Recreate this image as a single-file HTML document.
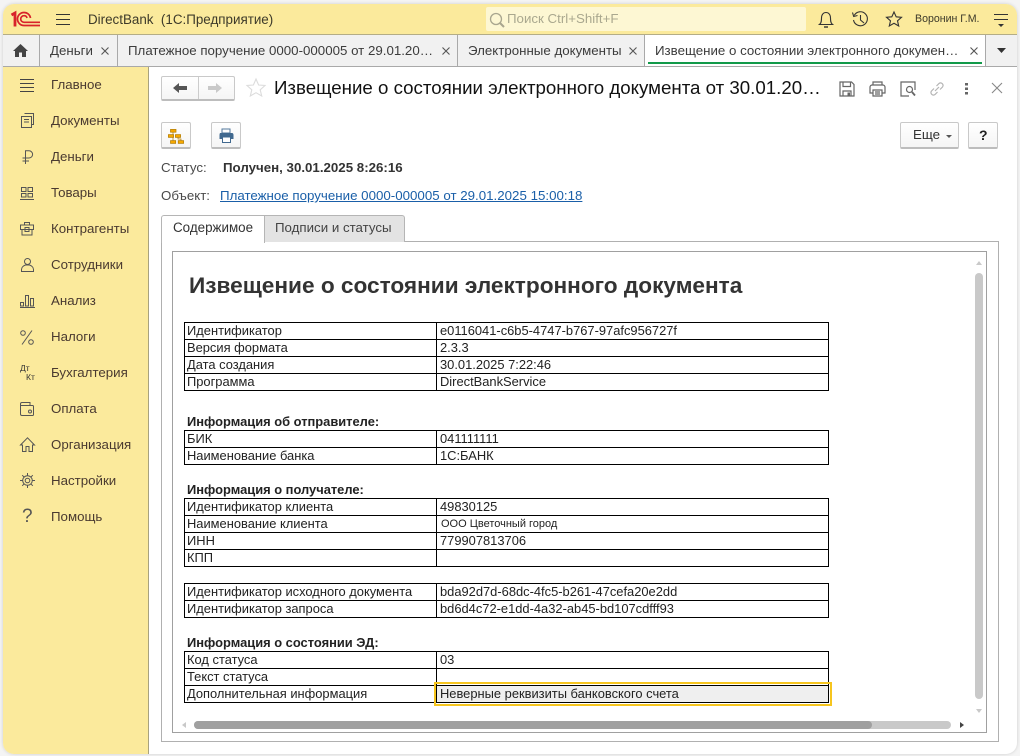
<!DOCTYPE html>
<html lang="ru"><head><meta charset="utf-8"><title>DirectBank</title>
<style>
html,body{margin:0;padding:0;background:#f4f4f4;}
body{position:relative;width:1020px;height:756px;overflow:hidden;font-family:"Liberation Sans",sans-serif;font-size:12px;color:#333;}
.a{position:absolute;white-space:nowrap;}
.win{position:absolute;left:3px;top:4px;width:1014px;height:750px;background:#fff;border-radius:11px;overflow:hidden;box-shadow:0 0 3px #ccc;}
.hdr{position:absolute;left:3px;top:4px;width:1014px;height:30px;background:#fbea9c;border-radius:11px 11px 0 0;}
.tabs{position:absolute;left:3px;top:35px;width:1014px;height:31px;background:#f1f1f1;}
.line{position:absolute;background:#a9a9a9;}
.side{position:absolute;left:3px;top:67px;width:145px;height:687px;background:#fbea9c;border-radius:0 0 0 11px;}
.m{position:absolute;left:51px;font-size:13.3px;color:#4a3a30;white-space:nowrap;line-height:16px;}
.t{position:absolute;font-size:13.3px;color:#3c3c3c;white-space:nowrap;line-height:16px;top:43px;}
.x{position:absolute;top:47px;width:8px;height:8px;}
.btn{position:absolute;background:linear-gradient(#fff,#f5f5f5);border:1px solid #c9c9c9;border-bottom:2px solid #bdbdbd;border-radius:2px;box-sizing:border-box;}
table{position:absolute;left:184px;width:645px;border-collapse:collapse;table-layout:fixed;font-size:12.9px;color:#222;}
td{border:1px solid #000;height:16px;padding:0 3px;line-height:16px;white-space:nowrap;overflow:hidden;box-sizing:border-box;}
td:first-child{width:252px;padding-left:2px;}
.b{position:absolute;left:187px;font-weight:bold;font-size:12.9px;color:#222;line-height:16px;white-space:nowrap;}
svg{position:absolute;overflow:visible;}
</style></head><body>
<div class="win"></div>
<div class="hdr"></div>
<div class="line" style="left:3px;top:34px;width:1014px;height:1px;background:#b4ad86"></div>
<div class="tabs"></div>
<div class="line" style="left:3px;top:66px;width:1014px;height:1px"></div>
<div class="side"></div>
<div class="line" style="left:148px;top:67px;width:1px;height:687px;background:#a8a27e"></div>

<svg style="left:11px;top:11px" width="30" height="16" viewBox="0 0 30 16" fill="none" stroke="#d8232a"><path d="M.5 4L4 2V15.500" stroke-width="2.800"/><path d="M29 14.500H13A6.500 6.500 0 0 1 13 1.500A6.500 6.500 0 0 1 19.500 7" stroke-width="1.700"/><path d="M29 11.300H13A3.300 3.300 0 0 1 13 4.700A3 3 0 0 1 16 7" stroke-width="1.700"/></svg>
<svg style="left:56px;top:13px" width="15" height="13" stroke="#333" stroke-width="1"><path d="M0 1.500H14M0 6.500H14M0 11.500H14"/></svg>
<div class="a" style="left:88px;top:12px;font-size:13.400px;line-height:16px;color:#3d3a2a">DirectBank&nbsp; (1С:Предприятие)</div>
<div class="a" style="left:486px;top:7px;width:320px;height:24px;background:#fdf7d3;border-radius:2px"></div>
<svg style="left:489px;top:12px" width="16" height="16" fill="none" stroke="#a9a68f" stroke-width="1.300"><circle cx="7" cy="7" r="5.500"/><path d="M11 11L15 15" stroke-width="2"/></svg>
<div class="a" style="left:507px;top:11px;font-size:13.300px;line-height:16px;color:#aaa88f">Поиск Ctrl+Shift+F</div>
<svg style="left:818px;top:11px" width="17" height="17" fill="none" stroke="#333" stroke-width="1.100"><path d="M1.500 13.500C3.500 12 3.500 9.500 3.500 7C3.500 3.500 5.500 1.500 8 1.500S12.500 3.500 12.500 7C12.500 9.500 12.500 12 14.500 13.500Z"/><path d="M6 16H10" stroke-width="1.400"/></svg>
<svg style="left:852px;top:11px" width="17" height="17" fill="none" stroke="#333" stroke-width="1.100"><path d="M2.200 4.500A7 7 0 1 1 1.500 9"/><path d="M0.500 1.500L1.700 5.500L5.500 4.500" /><path d="M8.500 4V9L12 12"/></svg>
<svg style="left:886px;top:11px" width="17" height="16" fill="none" stroke="#333" stroke-width="1.100"><path d="M8 1L10.200 5.800L15.500 6.300L11.500 9.800L12.700 15L8 12.300L3.300 15L4.500 9.800L0.500 6.300L5.800 5.800Z"/></svg>
<div class="a" style="left:915px;top:12px;font-size:10.600px;line-height:15px;color:#3d3a2a">Воронин Г.М.</div>
<svg style="left:994px;top:14px" width="15" height="13" stroke="#333" stroke-width="1"><path d="M0 .5H14M0 5.500H14"/><path d="M4 10H10L7 13Z" fill="#333" stroke="none"/></svg>

<svg style="left:13px;top:44px" width="15" height="13" fill="#444"><path d="M7.500 0L15 7H13V13H9V8.500H6V13H2V7H0Z"/></svg>
<div class="line" style="left:39px;top:35px;width:1px;height:31px"></div>
<div class="t" style="left:50px">Деньги</div>
<svg class="x" style="left:101px" stroke="#555" stroke-width="1.100"><path d="M.5 .5L7.500 7.500M7.500 .5L.5 7.500"/></svg>
<div class="line" style="left:117px;top:35px;width:1px;height:31px"></div>
<div class="t" style="left:128px">Платежное поручение 0000-000005 от 29.01.20…</div>
<svg class="x" style="left:442px" stroke="#555" stroke-width="1.100"><path d="M.5 .5L7.500 7.500M7.500 .5L.5 7.500"/></svg>
<div class="line" style="left:457px;top:35px;width:1px;height:31px"></div>
<div class="t" style="left:468px">Электронные документы</div>
<svg class="x" style="left:629px" stroke="#555" stroke-width="1.100"><path d="M.5 .5L7.500 7.500M7.500 .5L.5 7.500"/></svg>
<div class="line" style="left:644px;top:35px;width:1px;height:31px"></div>
<div class="a" style="left:645px;top:35px;width:340px;height:31px;background:#fff"></div>
<div class="t" style="left:655px">Извещение о состоянии электронного докумен…</div>
<svg class="x" style="left:970px" stroke="#555" stroke-width="1.100"><path d="M.5 .5L7.500 7.500M7.500 .5L.5 7.500"/></svg>
<div class="a" style="left:648px;top:62px;width:334px;height:2px;background:#129a4a"></div>
<div class="line" style="left:985px;top:35px;width:1px;height:31px"></div>
<svg style="left:997px;top:48px" width="10" height="6" fill="#333"><path d="M0 0H9L4.500 5Z"/></svg>

<svg style="left:20px;top:79px" width="14" height="13" stroke="#444"><path d="M0 .5H14M0 4.500H14M0 8.500H14M0 12.500H14"/></svg>
<div class="m" style="top:77px">Главное</div>
<svg style="left:21px;top:113px" width="13" height="15" fill="none" stroke="#555"><path d="M3.500 .5H12.500V11.500H10.500M.5 3.500H10.500V14.500H.5ZM3 6.500H8M3 9H8"/></svg>
<div class="m" style="top:113px">Документы</div>
<svg style="left:22px;top:150px" width="11" height="15" fill="none" stroke="#555"><path d="M3.500 14V.8H7A3.500 3.500 0 0 1 7 8H.5M.5 11H7"/></svg>
<div class="m" style="top:149px">Деньги</div>
<svg style="left:20px;top:186px" width="14" height="14" fill="none" stroke="#555"><path d="M1.500 1.500H6V5.500H1.500ZM8 1.500H12.500V5.500H8ZM1.500 7.500H6V11H1.500ZM8 7.500H12.500V11H8ZM0 13.500H14"/></svg>
<div class="m" style="top:185px">Товары</div>
<svg style="left:20px;top:222px" width="14" height="14" fill="none" stroke="#555"><path d="M4.500 3V.5H9.500V3M.5 3H13.500V7.500H.5ZM2 7.500V13H12V7.500M5 5.500H9V9.500H5Z"/></svg>
<div class="m" style="top:221px">Контрагенты</div>
<svg style="left:21px;top:258px" width="13" height="14" fill="none" stroke="#555"><circle cx="6.500" cy="3.500" r="3"/><path d="M.5 13.500V11.500C.5 9 3 7.500 4.500 7H8.500C10 7.500 12.500 9 12.500 11.500V13.500Z"/></svg>
<div class="m" style="top:257px">Сотрудники</div>
<svg style="left:20px;top:294px" width="15" height="14" fill="none" stroke="#555"><path d="M.5 8.500H3.500V12H.5ZM5.500 1.500H8.500V12H5.500ZM10.500 4.500H13.500V12H10.500ZM0 13.500H15"/></svg>
<div class="m" style="top:293px">Анализ</div>
<svg style="left:20px;top:330px" width="14" height="15" fill="none" stroke="#555"><circle cx="3" cy="3" r="2.300"/><circle cx="11" cy="12" r="2.300"/><path d="M12 .5L2 14.500"/></svg>
<div class="m" style="top:329px">Налоги</div>
<div class="a" style="left:20px;top:364px;font-size:8.500px;line-height:9px;color:#333">Дт</div>
<div class="a" style="left:26px;top:373px;font-size:8.500px;line-height:9px;color:#333">Кт</div>
<div class="m" style="top:365px">Бухгалтерия</div>
<svg style="left:20px;top:402px" width="14" height="14" fill="none" stroke="#555"><path d="M.5 12V2C.5 1 1 .5 2 .5H10V3.500M.5 3.500H12.500C13 3.500 13.500 4 13.500 4.500V12.500C13.500 13 13 13.500 12.500 13.500H2C1 13.500 .5 13 .5 12Z"/><circle cx="10" cy="9.500" r="1.500"/></svg>
<div class="m" style="top:401px">Оплата</div>
<svg style="left:20px;top:437px" width="15" height="15" fill="none" stroke="#555"><path d="M.5 8L7.500 .8L14.500 8H12.500V14.500H9V9.500H6V14.500H2.500V8Z"/></svg>
<div class="m" style="top:437px">Организация</div>
<svg style="left:20px;top:473px" width="15" height="15" fill="none" stroke="#555"><circle cx="7.500" cy="7.500" r="4.800"/><circle cx="7.500" cy="7.500" r="2.300"/><path d="M7.500 0V2.500M7.500 12.500V15M0 7.500H2.500M12.500 7.500H15M2.200 2.200L3.900 3.900M11.100 11.100L12.800 12.800M12.800 2.200L11.100 3.900M3.900 11.100L2.200 12.800"/></svg>
<div class="m" style="top:473px">Настройки</div>
<div class="a" style="left:22px;top:506px;font-size:19px;line-height:22px;color:#555">?</div>
<div class="m" style="top:509px">Помощь</div>

<div class="btn" style="left:161px;top:76px;width:74px;height:25px"></div>
<div class="a" style="left:198px;top:77px;width:1px;height:22px;background:#ccc"></div>
<svg style="left:173px;top:83px" width="15" height="10" fill="#555"><path d="M0 5L6 0V3H14V7H6V10Z"/></svg>
<svg style="left:208px;top:83px" width="15" height="10" fill="#c9c9c9"><path d="M14 5L8 0V3H0V7H8V10Z"/></svg>
<svg style="left:246px;top:78px" width="20" height="19" fill="none" stroke="#dcdcdc" stroke-width="1.100"><path d="M10 1L12.600 7L19 7.500L14.200 11.800L15.700 18L10 14.700L4.300 18L5.800 11.800L1 7.500L7.400 7Z"/></svg>
<div class="a" style="left:274px;top:76px;font-size:18.700px;line-height:24px;color:#111">Извещение о состоянии электронного документа от 30.01.20…</div>
<svg style="left:839px;top:81px" width="16" height="16" fill="none" stroke="#666" stroke-width="1.200"><path d="M1 1H12.500L15 3.500V15H1ZM4 1V5.500H11.500V1M4 15V10H12V15"/><path d="M8.500 11.500H11V15H8.500Z" fill="#666" stroke="none"/></svg>
<svg style="left:869px;top:81px" width="17" height="16" fill="none" stroke="#666" stroke-width="1.200"><path d="M4 4V1H13V4M3.500 12H1V6C1 5 2 4 3 4H14C15 4 16 5 16 6V12H13.500"/><path d="M4 9H13V15H4ZM6 11H11M6 13H11"/></svg>
<svg style="left:900px;top:81px" width="16" height="16" fill="none" stroke="#666" stroke-width="1.200"><path d="M15 9V1H1V15H9"/><circle cx="9.500" cy="8.500" r="3"/><path d="M12 11L15 14.500" stroke-width="1.800"/></svg>
<svg style="left:929px;top:81px" width="16" height="16" fill="none" stroke="#b5b5b5" stroke-width="1.200"><path d="M6 10L10 6M5 7.500L2.500 10A2.500 2.500 0 0 0 6 13.500L8.500 11M7.500 5L10 2.500A2.500 2.500 0 0 1 13.500 6L11 8.500"/></svg>
<svg style="left:965px;top:83px" width="4" height="12" fill="#666"><rect x="0" y="0" width="3" height="2.500"/><rect x="0" y="4.500" width="3" height="2.500"/><rect x="0" y="9" width="3" height="2.500"/></svg>
<svg style="left:991px;top:82px" width="12" height="12" stroke="#888" stroke-width="1.100"><path d="M1 1L11 11M11 1L1 11"/></svg>

<div class="btn" style="left:161px;top:122px;width:30px;height:27px"></div>
<svg style="left:168px;top:129px" width="16" height="15" fill="#f5a800" stroke="#b27b00" stroke-width=".7"><rect x="2.500" y=".4" width="5.500" height="2.800"/><rect x=".4" y="5.600" width="5.200" height="2.800"/><rect x="7.400" y="5.600" width="5.200" height="2.800"/><rect x="2.500" y="11.600" width="5.200" height="2.800"/><rect x="10.200" y="11.600" width="5.400" height="2.800"/><path d="M5 3.200V5.600M5 8.400V11.600M10 8.400V10H13V11.600" fill="none"/></svg>
<div class="btn" style="left:211px;top:122px;width:30px;height:27px"></div>
<svg style="left:219px;top:129px" width="15" height="14"><path d="M3 0H11V4H3Z" fill="#fff" stroke="#52779b"/><path d="M1 4H13C14 4 14.500 5 14.500 6V10H11.500V8H3.500V10H.5V6C.5 5 1 4 1 4Z" fill="#41698f"/><path d="M3.500 8H11.500V13.500H3.500Z" fill="#fff" stroke="#41698f"/></svg>
<div class="btn" style="left:900px;top:122px;width:59px;height:27px"></div>
<div class="a" style="left:913px;top:127px;font-size:13.300px;line-height:16px;color:#333">Еще</div>
<svg style="left:946px;top:135px" width="7" height="4" fill="#555"><path d="M0 0H6L3 3Z"/></svg>
<div class="btn" style="left:968px;top:122px;width:30px;height:27px"></div>
<div class="a" style="left:979px;top:127px;font-size:14px;font-weight:bold;line-height:16px;color:#222">?</div>

<div class="a" style="left:161px;top:160px;font-size:13.300px;line-height:16px;color:#4a4a4a">Статус:</div>
<div class="a" style="left:223px;top:160px;font-size:13.300px;font-weight:bold;line-height:16px;color:#333">Получен, 30.01.2025 8:26:16</div>
<div class="a" style="left:161px;top:188px;font-size:13.300px;line-height:16px;color:#4a4a4a">Объект:</div>
<div class="a" style="left:220px;top:188px;font-size:13.320px;line-height:16px;color:#1a5fa8;text-decoration:underline">Платежное поручение 0000-000005 от 29.01.2025 15:00:18</div>

<div class="a" style="left:161px;top:241px;width:836px;height:499px;border:1px solid #b0b0b0"></div>
<div class="a" style="left:264px;top:215px;width:139px;height:26px;background:#e3e3e3;border:1px solid #b5b5b5;border-bottom:none;border-radius:0 3px 0 0;box-sizing:content-box"></div>
<div class="a" style="left:161px;top:215px;width:102px;height:27px;background:#fff;border:1px solid #b5b5b5;border-bottom:none;border-radius:3px 0 0 0"></div>
<div class="a" style="left:173px;top:220px;font-size:13.400px;line-height:16px;color:#333">Содержимое</div>
<div class="a" style="left:275px;top:220px;font-size:13.300px;line-height:16px;color:#444">Подписи и статусы</div>

<div class="a" style="left:172px;top:251px;width:813px;height:480px;border:1px solid #a0a0a0"></div>
<div class="a" style="left:189px;top:273px;font-size:22.640px;font-weight:bold;line-height:26px;color:#333">Извещение о состоянии электронного документа</div>

<table style="top:322px"><tr><td>Идентификатор</td><td>e0116041-c6b5-4747-b767-97afc956727f</td></tr><tr><td>Версия формата</td><td>2.3.3</td></tr><tr><td>Дата создания</td><td>30.01.2025 7:22:46</td></tr><tr><td>Программа</td><td>DirectBankService</td></tr></table>
<div class="b" style="top:414px">Информация об отправителе:</div>
<table style="top:430px"><tr><td>БИК</td><td>041111111</td></tr><tr><td>Наименование банка</td><td>1С:БАНК</td></tr></table>
<div class="b" style="top:482px">Информация о получателе:</div>
<table style="top:498px"><tr><td>Идентификатор клиента</td><td>49830125</td></tr><tr><td>Наименование клиента</td><td style="font-size:11px;padding-left:4px">ООО Цветочный город</td></tr><tr><td>ИНН</td><td>779907813706</td></tr><tr><td>КПП</td><td></td></tr></table>
<table style="top:583px"><tr><td>Идентификатор исходного документа</td><td>bda92d7d-68dc-4fc5-b261-47cefa20e2dd</td></tr><tr><td>Идентификатор запроса</td><td>bd6d4c72-e1dd-4a32-ab45-bd107cdfff93</td></tr></table>
<div class="b" style="top:635px">Информация о состоянии ЭД:</div>
<table style="top:651px"><tr><td>Код статуса</td><td>03</td></tr><tr><td>Текст статуса</td><td></td></tr><tr><td>Дополнительная информация</td><td style="background:#efefef">Неверные реквизиты банковского счета</td></tr></table>
<div class="a" style="left:434px;top:682px;width:394px;height:20px;border:2px solid #f6c51e"></div>

<div class="a" style="left:975px;top:273px;width:8px;height:426px;background:#c9c9c9;border-radius:4px"></div>
<svg style="left:976px;top:261px" width="7" height="5" fill="#c9c9c9"><path d="M3 0L6 4H0Z"/></svg>
<svg style="left:976px;top:709px" width="7" height="5" fill="#c9c9c9"><path d="M3 4L6 0H0Z"/></svg>
<div class="a" style="left:194px;top:721px;width:757px;height:8px;background:#c9c9c9;border-radius:4px"></div>
<div class="a" style="left:194px;top:721px;width:678px;height:8px;background:#a0a0a0;border-radius:4px"></div>
<svg style="left:182px;top:722px" width="5" height="7" fill="#c9c9c9"><path d="M0 3L4 0V6Z"/></svg>
<svg style="left:960px;top:722px" width="5" height="7" fill="#444"><path d="M4 3L0 0V6Z"/></svg>
</body></html>
